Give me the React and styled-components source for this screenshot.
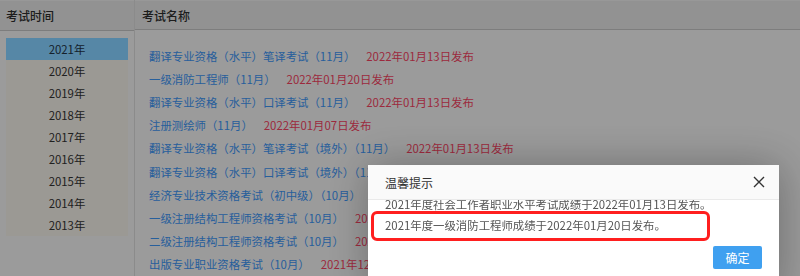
import React from "react";
import styled, { createGlobalStyle } from "styled-components";

const GlobalStyle = createGlobalStyle`
    html, body {
        margin: 0;
        padding: 0;
        height: 100%;
        overflow: hidden;
    }
    body {
        font-family: "Noto Sans CJK SC", "Noto Sans", "Liberation Sans", sans-serif;
        font-size: 11.4px;
        background: #dedede;
    }
`;

const years = ["2021", "2020", "2019", "2018", "2017", "2016", "2015", "2014", "2013"];

const exams = [
    { name: "翻译专业资格（水平）笔译考试（11月）", date: "2022年01月13日发布" },
    { name: "一级消防工程师（11月）", date: "2022年01月20日发布" },
    { name: "翻译专业资格（水平）口译考试（11月）", date: "2022年01月13日发布" },
    { name: "注册测绘师（11月）", date: "2022年01月07日发布" },
    { name: "翻译专业资格（水平）笔译考试（境外）（11月）", date: "2022年01月13日发布" },
    { name: "翻译专业资格（水平）口译考试（境外）（11月）", date: "2022年01月13日发布" },
    { name: "经济专业技术资格考试（初中级）（10月）", date: "2021年12月24日发布" },
    { name: "一级注册结构工程师资格考试（10月）", date: "2021年12月24日发布" },
    { name: "二级注册结构工程师资格考试（10月）", date: "2021年12月24日发布" },
    { name: "出版专业职业资格考试（10月）", date: "2021年12月20日发布" },
];

export default function App() {
    return (
        <>
            <GlobalStyle />
            <Page>
                <Column $width="134px" $border>
                    <HeadCell>考试时间</HeadCell>
                    <YearList>
                        {years.map((y, i) => (
                            <YearRow key={y} $active={i === 0}>
                                {y}年
                            </YearRow>
                        ))}
                    </YearList>
                </Column>
                <Column>
                    <HeadCell $pad="7px">考试名称</HeadCell>
                    <ExamList>
                        {exams.map((e) => (
                            <ExamRow key={e.name}>
                                <ExamName>{e.name}</ExamName>
                                <ExamDate>{e.date}</ExamDate>
                            </ExamRow>
                        ))}
                    </ExamList>
                </Column>
            </Page>
            <Shade />
            <Dialog>
                <DialogTitle>
                    <span>温馨提示</span>
                    <CloseButton aria-label="close">
                        <svg width="12" height="12" viewBox="0 0 12 12">
                            <path d="M1 1L11 11M11 1L1 11" stroke="#333" strokeWidth="1.4" />
                        </svg>
                    </CloseButton>
                </DialogTitle>
                <DialogBody>
                    <Scroller>
                        <Notice>2021年度社会工作者职业水平考试成绩于2022年01月13日发布。</Notice>
                        <Notice>2021年度一级消防工程师成绩于2022年01月20日发布。</Notice>
                    </Scroller>
                    <Highlight />
                </DialogBody>
                <DialogFooter>
                    <OkButton>确定</OkButton>
                </DialogFooter>
            </Dialog>
        </>
    );
}

const Page = styled.div`
    display: flex;
    height: 276px;
    width: 800px;
    background: #dedede;
`;

const Column = styled.div`
    display: flex;
    flex-direction: column;
    flex: ${(props) => (props.$width ? `0 0 ${props.$width}` : "1")};
    border-right: ${(props) => (props.$border ? "1px solid #c8c8c8" : "none")};
`;

const HeadCell = styled.div`
    box-sizing: border-box;
    height: 31px;
    padding: 0 ${(props) => props.$pad || "6px"};
    display: flex;
    align-items: center;
    background: #d1d1d1;
    border-top: 1px solid #dadada;
    border-bottom: 1px solid #b3b3b3;
    color: #2a2a2a;
    font-size: 12px;
    font-weight: 500;
`;

const YearList = styled.div`
    margin: 7px 6px 0;
    background: #dfdbd4;
    display: flex;
    flex-direction: column;
`;

const YearRow = styled.div`
    height: 22px;
    line-height: 22px;
    text-align: center;
    color: ${(props) => (props.$active ? "#1d2f3e" : "#2f2f2f")};
    background: ${(props) => (props.$active ? "#7cc2ee" : "transparent")};
`;

const ExamList = styled.div`
    padding: 15px 0 0 14px;
    display: flex;
    flex-direction: column;
`;

const ExamRow = styled.div`
    display: flex;
    gap: 11px;
    height: 23.1px;
    line-height: 23px;
    white-space: nowrap;
`;

const ExamName = styled.span`
    color: #3888e0;
`;

const ExamDate = styled.span`
    color: #e03c58;
`;

const Shade = styled.div`
    position: fixed;
    inset: 0;
    background: rgba(0, 0, 0, 0.3);
`;

const Dialog = styled.div`
    position: fixed;
    left: 368px;
    top: 165px;
    width: 411px;
    height: 130px;
    background: #fff;
    box-shadow: 1px 1px 40px rgba(0, 0, 0, 0.3);
    display: flex;
    flex-direction: column;
`;

const DialogTitle = styled.div`
    position: relative;
    z-index: 1;
    box-sizing: border-box;
    height: 35px;
    padding: 0 14px 0 17px;
    display: flex;
    align-items: center;
    justify-content: space-between;
    background: #fafafa;
    border-bottom: 1px solid #eaeaea;
    color: #333;
    font-size: 12px;
`;

const CloseButton = styled.span`
    display: flex;
    width: 12px;
    height: 12px;
`;

const DialogBody = styled.div`
    position: relative;
    height: 46px;
`;

const Scroller = styled.div`
    height: 100%;
    overflow: hidden;
    padding: 0 17px;
`;

const Notice = styled.div`
    line-height: 21px;
    color: #555;
    white-space: nowrap;
    &:first-child {
        margin-top: -6px;
    }
`;

const Highlight = styled.div`
    position: absolute;
    left: 3px;
    top: 11px;
    width: 333px;
    height: 24px;
    border: 3.5px solid #ff1f1f;
    border-radius: 6px;
`;

const DialogFooter = styled.div`
    display: flex;
    justify-content: flex-end;
    padding: 0 17px 0 0;
`;

const OkButton = styled.button`
    width: 49px;
    height: 23px;
    border: none;
    border-radius: 2px;
    background: #3fa0f0;
    color: #fff;
    font-family: inherit;
    font-size: 12px;
    padding: 0;
`;
